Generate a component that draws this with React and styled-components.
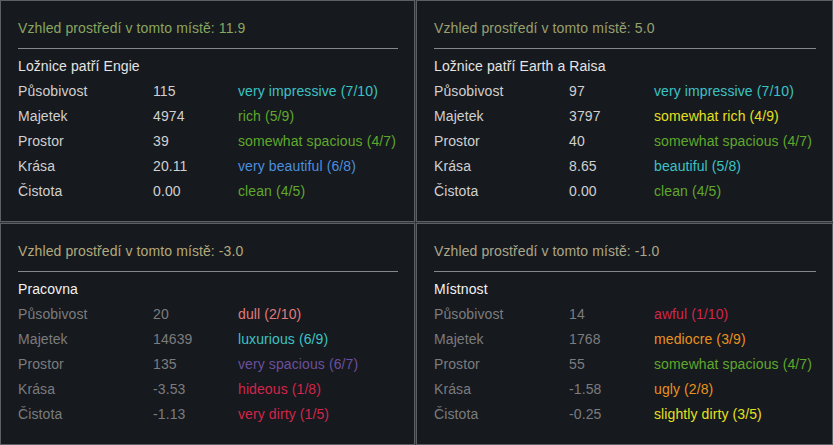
import styled, { createGlobalStyle } from 'styled-components'

const GlobalStyle = createGlobalStyle`
  html, body {
    margin: 0;
    padding: 0;
    background: #34363a;
  }
  body {
    font-family: "Liberation Sans", Arial, sans-serif;
    font-size: 14px;
    letter-spacing: 0.1px;
  }
`

const Grid = styled.div`
  display: grid;
  grid-template-columns: 415px 417px;
  grid-template-rows: 222px 222px;
  gap: 1px;
  width: 833px;
  height: 445px;
`

const Panel = styled.div`
  background: #16191e;
  border: 1px solid #5c5f64;
  padding: 17px 16px 0 17px;
  box-sizing: border-box;
`

const Title = styled.div`
  color: ${props => props.tone};
  line-height: 20px;
  padding-bottom: 10px;
  border-bottom: 1px solid #86888b;
`

const Heading = styled.div`
  color: ${props => (props.dim ? '#f2f2f2' : '#e4e4e4')};
  line-height: 25px;
  margin-top: 5px;
`

const Row = styled.div`
  display: grid;
  grid-template-columns: 135px 85px 1fr;
  line-height: 25px;
  white-space: nowrap;
`

const Cell = styled.span`
  color: ${props => (props.dim ? '#7b7c7e' : '#d0d0d0')};
`

const Rating = styled.span`
  color: ${props => props.color};
`

const C = {
  cyan: '#3dc2c4',
  green: '#5fa82c',
  blue: '#4d8ede',
  yellow: '#e4e020',
  pink: '#e07a7c',
  purple: '#6c4f9c',
  crimson: '#d2264a',
  orange: '#e8921e'
}

const panels = [
  {
    title: 'Vzhled prostředí v tomto místě: 11.9',
    tone: '#89a65e',
    room: 'Ložnice patří Engie',
    rows: [
      ['Působivost', '115', 'very impressive (7/10)', C.cyan],
      ['Majetek', '4974', 'rich (5/9)', C.green],
      ['Prostor', '39', 'somewhat spacious (4/7)', C.green],
      ['Krása', '20.11', 'very beautiful (6/8)', C.blue],
      ['Čistota', '0.00', 'clean (4/5)', C.green]
    ]
  },
  {
    title: 'Vzhled prostředí v tomto místě: 5.0',
    tone: '#98a06e',
    room: 'Ložnice patří Earth a Raisa',
    rows: [
      ['Působivost', '97', 'very impressive (7/10)', C.cyan],
      ['Majetek', '3797', 'somewhat rich (4/9)', C.yellow],
      ['Prostor', '40', 'somewhat spacious (4/7)', C.green],
      ['Krása', '8.65', 'beautiful (5/8)', C.cyan],
      ['Čistota', '0.00', 'clean (4/5)', C.green]
    ]
  },
  {
    title: 'Vzhled prostředí v tomto místě: -3.0',
    tone: '#b2aa7c',
    room: 'Pracovna',
    dim: true,
    rows: [
      ['Působivost', '20', 'dull (2/10)', C.pink],
      ['Majetek', '14639', 'luxurious (6/9)', C.cyan],
      ['Prostor', '135', 'very spacious (6/7)', C.purple],
      ['Krása', '-3.53', 'hideous (1/8)', C.crimson],
      ['Čistota', '-1.13', 'very dirty (1/5)', C.crimson]
    ]
  },
  {
    title: 'Vzhled prostředí v tomto místě: -1.0',
    tone: '#aaa78a',
    room: 'Místnost',
    dim: true,
    rows: [
      ['Působivost', '14', 'awful (1/10)', C.crimson],
      ['Majetek', '1768', 'mediocre (3/9)', C.orange],
      ['Prostor', '55', 'somewhat spacious (4/7)', C.green],
      ['Krása', '-1.58', 'ugly (2/8)', C.orange],
      ['Čistota', '-0.25', 'slightly dirty (3/5)', C.yellow]
    ]
  }
]

export default function App () {
  return (
    <>
      <GlobalStyle />
      <Grid>
        {panels.map((p, i) => (
          <Panel key={i}>
            <Title tone={p.tone}>{p.title}</Title>
            <Heading dim={p.dim}>{p.room}</Heading>
            {p.rows.map(([label, value, text, color]) => (
              <Row key={label}>
                <Cell dim={p.dim}>{label}</Cell>
                <Cell dim={p.dim}>{value}</Cell>
                <Rating color={color}>{text}</Rating>
              </Row>
            ))}
          </Panel>
        ))}
      </Grid>
    </>
  )
}
